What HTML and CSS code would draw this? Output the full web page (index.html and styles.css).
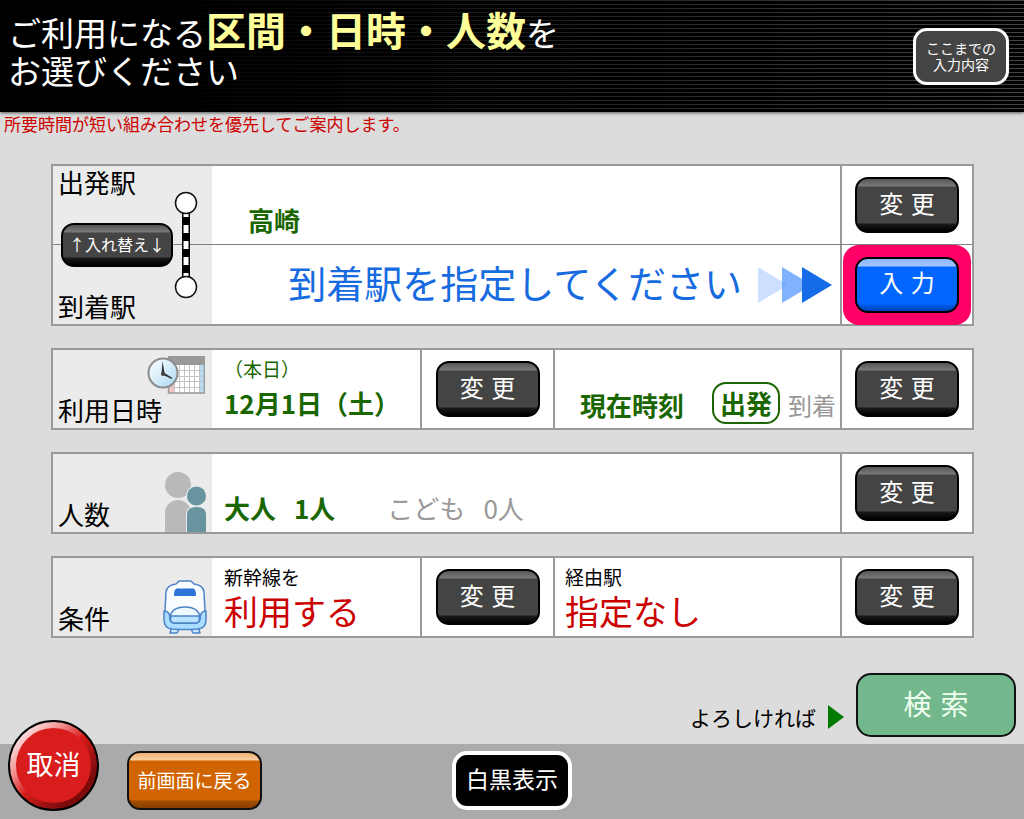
FILE: index.html
```html
<!DOCTYPE html>
<html lang="ja">
<head>
<meta charset="utf-8">
<meta name="viewport" content="width=device-width, initial-scale=1">
<title>区間・日時・人数の選択</title>
<link rel="stylesheet" href="styles.css">
</head>
<body>
<header class="header">
  <h1 class="title">ご利用になる<strong>区間・日時・人数</strong>を<br>お選びください</h1>
  <button type="button" class="summary-btn">ここまでの<br>入力内容</button>
</header>

<main class="main">
  <p class="notice">所要時間が短い組み合わせを優先してご案内します。</p>

  <div class="panels">
    <section class="panel route">
      <div class="row">
        <div class="label label-top"><span>出発駅</span></div>
        <div class="value wide station">高崎</div>
        <div class="action"><button type="button" class="btn">変 更</button></div>
      </div>
      <div class="row">
        <div class="label"><span>到着駅</span></div>
        <div class="value wide prompt">
          <span>到着駅を指定してください</span>
          <svg class="arrows" viewBox="0 0 74 36" aria-hidden="true">
            <path d="M0 0 30 18 0 36Z" fill="#ccdfff"/>
            <path d="M24 0 54 18 24 36Z" fill="#5c9cff" fill-opacity=".78"/>
            <path d="M44 0 74 18 44 36Z" fill="#166be8"/>
          </svg>
        </div>
        <div class="action action-active"><button type="button" class="btn btn-input">入 力</button></div>
      </div>
      <div class="route-tools">
        <button type="button" class="swap-btn">↑入れ替え↓</button>
        <svg class="line-icon" viewBox="0 0 24 108" aria-hidden="true">
          <path d="M8 20h8v68H8z" fill="#000"/>
          <path d="M9.500 23h5v3h-5zM9.500 34h5v8h-5zM9.500 50h5v8h-5zM9.500 66h5v8h-5zM9.500 82h5v4h-5z" fill="#fff"/>
          <circle cx="12" cy="12" r="10.500" fill="#fff" stroke="#111" stroke-width="1.500"/>
          <circle cx="12" cy="96" r="10.500" fill="#fff" stroke="#111" stroke-width="1.500"/>
        </svg>
      </div>
    </section>

    <section class="panel">
      <div class="row">
        <div class="label">
          <span>利用日時</span>
          <svg class="icon icon-date" viewBox="0 0 58 38" aria-hidden="true">
            <defs>
              <linearGradient id="face" x1="0" y1="0" x2="1" y2="1">
                <stop offset="0" stop-color="#fff"/><stop offset=".5" stop-color="#d5edfa"/><stop offset="1" stop-color="#a9d7f0"/>
              </linearGradient>
            </defs>
            <path d="M21.500 1h36v36h-36z" fill="#fff"/>
            <path d="M22 9h5v28h-5z" fill="#f3c3c3"/>
            <path d="M52 9h5v28h-5z" fill="#b9dcf5"/>
            <path d="M27.500 9v28M32.500 9v28M37.500 9v28M42.500 9v28M47.500 9v28M52.500 9v28M22 14.500h35M22 20.500h35M22 25.500h35M22 31.500h35" stroke="#c4c4c4" fill="none"/>
            <path d="M21.500 1h36v36h-36z" fill="none" stroke="#999" stroke-width="1.500"/>
            <path d="M21 0h37v9H21z" fill="#999"/>
            <circle cx="16" cy="17" r="14.500" fill="url(#face)" stroke="#8c8c8c" stroke-width="2"/>
            <path d="M14.500 18 15.500 5l2 12 8 5-1 1Z" fill="#333"/>
            <circle cx="16" cy="18" r="2" fill="#444"/>
          </svg>
        </div>
        <div class="value stacked green"><span class="small">（本日）</span><b>12月1日（土）</b></div>
        <div class="action"><button type="button" class="btn">変 更</button></div>
        <div class="value second time"><b class="now">現在時刻</b><b class="badge">出発</b><span class="muted">到着</span></div>
        <div class="action"><button type="button" class="btn">変 更</button></div>
      </div>
    </section>

    <section class="panel">
      <div class="row">
        <div class="label">
          <span>人数</span>
          <svg class="icon icon-people" viewBox="0 0 42 60" aria-hidden="true">
            <circle cx="13" cy="13" r="13" fill="#b9b9b9"/>
            <path d="M0 60V41a13 13 0 0 1 26 0v19Z" fill="#b9b9b9"/>
            <path d="M21 60V43q0-9 10.500-9T42 43v17Z" fill="#ebebeb"/>
            <circle cx="31.500" cy="24" r="10.500" fill="#ebebeb"/>
            <circle cx="31.500" cy="24" r="9.500" fill="#67949f"/>
            <path d="M22 60V43q0-8 9.500-8T41 43v17Z" fill="#67949f"/>
          </svg>
        </div>
        <div class="value wide people">
          <b><span>大人</span><span>1人</span></b>
          <span class="child"><span>こども</span><span>0人</span></span>
        </div>
        <div class="action"><button type="button" class="btn">変 更</button></div>
      </div>
    </section>

    <section class="panel">
      <div class="row">
        <div class="label">
          <span>条件</span>
          <svg class="icon icon-train" viewBox="0 0 44 54" aria-hidden="true">
            <g stroke="#4c84c8" stroke-width="1.500" stroke-linejoin="round">
              <path d="M9 46 7 53h7l2-4h12l2 4h7l-2-7Z" fill="#cdeaff"/>
              <path d="M16 1h12l3 3q9 1 10 8l1 19v8q0 8-7 9H9q-7-1-7-9v-8l1-19q1-7 10-8Z" fill="#f9fdff"/>
              <path d="M1 31q6 0 6 8 1 4 5 4h20q4 0 5-4 0-8 6-8v9q0 8-8 9-13 1-26 0-8-1-8-9Z" fill="#a9dcff"/>
              <path d="M7 38q1-11 15-11t15 11q0 5-5 5H12q-5 0-5-5Z" fill="#eef8ff"/>
              <path d="M8 36h28q2 7-4 7H12q-6 0-4-7Z" fill="#b9e3ff"/>
            </g>
            <path d="M14 8.500h16q3 0 3 7.500H11q0-7.500 3-7.500Z" fill="#2f73d8"/>
          </svg>
        </div>
        <div class="value stacked"><span class="small">新幹線を</span><span class="choice">利用する</span></div>
        <div class="action"><button type="button" class="btn">変 更</button></div>
        <div class="value second stacked"><span class="small">経由駅</span><span class="choice">指定なし</span></div>
        <div class="action"><button type="button" class="btn">変 更</button></div>
      </div>
    </section>
  </div>

  <div class="submit">
    <span class="submit-hint">よろしければ</span>
    <svg class="submit-arrow" viewBox="0 0 16 24" aria-hidden="true"><path d="M0 0 16 12 0 24Z" fill="#007a00"/></svg>
    <button type="button" class="search-btn">検 索</button>
  </div>
</main>

<footer class="footer">
  <div class="footer-left">
    <button type="button" class="cancel-btn"><span>取消</span></button>
    <button type="button" class="back-btn">前画面に戻る</button>
  </div>
  <button type="button" class="mono-btn">白黒表示</button>
</footer>
</body>
</html>
```
FILE: styles.css
```css
* { box-sizing: border-box; }

body {
  margin: 0;
  min-height: 100vh;
  display: flex;
  flex-direction: column;
  background: #dcdcdc;
  color: #000;
  font-family: "Noto Sans CJK JP", sans-serif;
  font-size: 26px;
  line-height: 32px;
}

button {
  margin: 0;
  padding: 0;
  font-family: "Noto Sans CJK JP", sans-serif;
  color: #fff;
  cursor: pointer;
  white-space: nowrap;
}

/* Header */
.header {
  display: flex;
  justify-content: space-between;
  align-items: center;
  min-height: 112px;
  padding: 0 15px 0 8px;
  background:
    linear-gradient(90deg, #000 15%, transparent),
    repeating-linear-gradient(#444 0 1px, #000 1px 4px);
  box-shadow: 0 1px 3px #555;
}

.title {
  margin: 0;
  padding-bottom: 14px;
  color: #fff;
  font-size: 33px;
  font-weight: 400;
  line-height: 38px;
}

.title strong {
  color: #ffff99;
  font-size: 40px;
  font-weight: 700;
  line-height: 38px;
}

.summary-btn {
  width: 96px;
  height: 57px;
  border: 3px solid #fff;
  border-radius: 14px;
  background: #444;
  font-size: 14px;
  line-height: 16px;
}

/* Main */
.main { flex: 1; }

.notice {
  margin: 0 0 28px;
  padding: 0 4px;
  color: #c00;
  font-size: 17px;
  line-height: 24px;
}

.panels {
  display: flex;
  flex-direction: column;
  gap: 22px;
  margin: 0 50px 0 51px;
}

.panel {
  position: relative;
  border: 2px solid #999;
  background: #fff;
}

.row {
  display: grid;
  grid-template-columns: 159px 208fr 133px 287fr 132px;
  min-height: 78px;
}

.row + .row {
  min-height: 80px;
  border-top: 1px solid #808080;
}

.label {
  display: grid;
  align-items: end;
  padding: 2px 5px;
  background: #ebebeb;
}

.label-top {
  align-items: start;
  padding-top: 0;
}

.label > * { grid-area: 1 / 1; }

.icon { justify-self: end; }

.icon-date { width: 58px; height: 38px; align-self: start; margin: 4px 2px 0 0; }
.icon-people { width: 42px; height: 60px; margin-bottom: -2px; }
.icon-train { width: 44px; height: 54px; }

.value {
  display: flex;
  align-items: flex-end;
  padding: 4px 12px;
}

.wide { grid-column: span 3; }

.action {
  display: flex;
  align-items: center;
  justify-content: center;
  border-left: 2px solid #999;
}

.second { border-left: 2px solid #999; padding-left: 10px; }

.station {
  padding: 0 36px 8px;
  color: #1a6600;
  font-weight: 700;
}

.prompt {
  align-items: center;
  justify-content: flex-end;
  gap: 16px;
  padding: 0 8px;
  color: #166be0;
  font-size: 38px;
  line-height: 48px;
}

.prompt span { padding-bottom: 6px; }

.arrows { width: 74px; height: 36px; }

.stacked {
  flex-direction: column;
  align-items: flex-start;
  padding-top: 5px;
}

.small { font-size: 19px; line-height: 28px; }

.green { color: #1a6600; gap: 4px; }

.choice {
  color: #c00;
  font-size: 34px;
  line-height: 40px;
}

.time {
  justify-content: flex-end;
  gap: 8px;
  padding: 4px;
  color: #1a6600;
  line-height: 38px;
}

.now { margin-right: 20px; }

.badge {
  padding: 0 6px;
  border: 2px solid #1a6600;
  border-radius: 14px;
}

.muted { color: #999; font-size: 24px; }

.people {
  gap: 52px;
  padding: 0 12px 8px;
}

.people b, .child { display: flex; gap: 18px; }
.people b { color: #1a6600; }
.child { color: #999; }

/* Buttons */
.btn, .swap-btn {
  border: 2px solid #000;
  border-radius: 13px;
  background: linear-gradient(#555 0, #7a7a7a 7px, #444 8px, #444 calc(100% - 8px), #1a1a1a calc(100% - 7px), #000);
}

.btn {
  position: relative;
  width: 104px;
  height: 56px;
  padding-bottom: 6px;
  font-family: "DejaVu Sans", "Noto Sans CJK JP", sans-serif;
  font-size: 24px;
}

.btn-input {
  background: linear-gradient(#8cb6ff 0, #a4c6ff 7px, #06f 8px, #06f calc(100% - 8px), #0040b0);
}

/* Highlight ring round the next required step */
.action-active { position: relative; }

.action-active::before {
  content: "";
  position: absolute;
  inset: 0 1px -1px;
  border-radius: 16px;
  background: #ff0066;
}

/* Swap control and line diagram, laid over both station rows */
.route-tools {
  position: absolute;
  inset: 0 auto 0 8px;
  display: flex;
  align-items: center;
  gap: 1px;
}

.swap-btn {
  width: 112px;
  height: 44px;
  padding-bottom: 2px;
  font-size: 16px;
}

.line-icon { width: 24px; height: 108px; }

.submit {
  display: flex;
  align-items: flex-end;
  justify-content: flex-end;
  gap: 12px;
  padding: 35px 8px 7px;
}

.submit-hint { margin-bottom: 4px; font-size: 21px; }
.submit-arrow { width: 16px; height: 24px; margin-bottom: 8px; }

.search-btn {
  width: 160px;
  height: 64px;
  padding-bottom: 4px;
  border: 2px solid #111;
  border-radius: 15px;
  background: #73b88c;
  color: #f0fff0;
  font-family: "DejaVu Sans", "Noto Sans CJK JP", sans-serif;
  font-size: 28px;
}

/* Footer */
.footer {
  display: grid;
  grid-template-columns: 1fr auto 1fr;
  align-items: start;
  padding: 7px 8px 8px;
  background: #aaa;
}

.footer-left { display: flex; align-items: flex-start; gap: 28px; }

.cancel-btn {
  display: grid;
  width: 91px;
  height: 91px;
  margin-top: -31px;
  padding: 6px;
  border: 2px solid #000;
  border-radius: 50%;
  background: linear-gradient(135deg, #ffd8d8 15%, #f09090 32%, #d81c1c 50%, #7c0c0c 78%);
  font-size: 27px;
}

.cancel-btn span {
  display: grid;
  place-items: center;
  padding-bottom: 4px;
  border-radius: 50%;
  background: #d91c1c;
}

.back-btn {
  width: 135px;
  height: 59px;
  padding-bottom: 2px;
  border: 2px solid #111;
  border-radius: 13px;
  background: linear-gradient(#f2b070 0, #f8cfa0 7px, #d06400 8px, #d06400 calc(100% - 8px), #a04c00 calc(100% - 7px), #8a4000);
  font-size: 19px;
}

.mono-btn {
  width: 120px;
  height: 59px;
  padding-bottom: 5px;
  border: 4px solid #fff;
  border-radius: 15px;
  background: #000;
  font-size: 23px;
}
```
